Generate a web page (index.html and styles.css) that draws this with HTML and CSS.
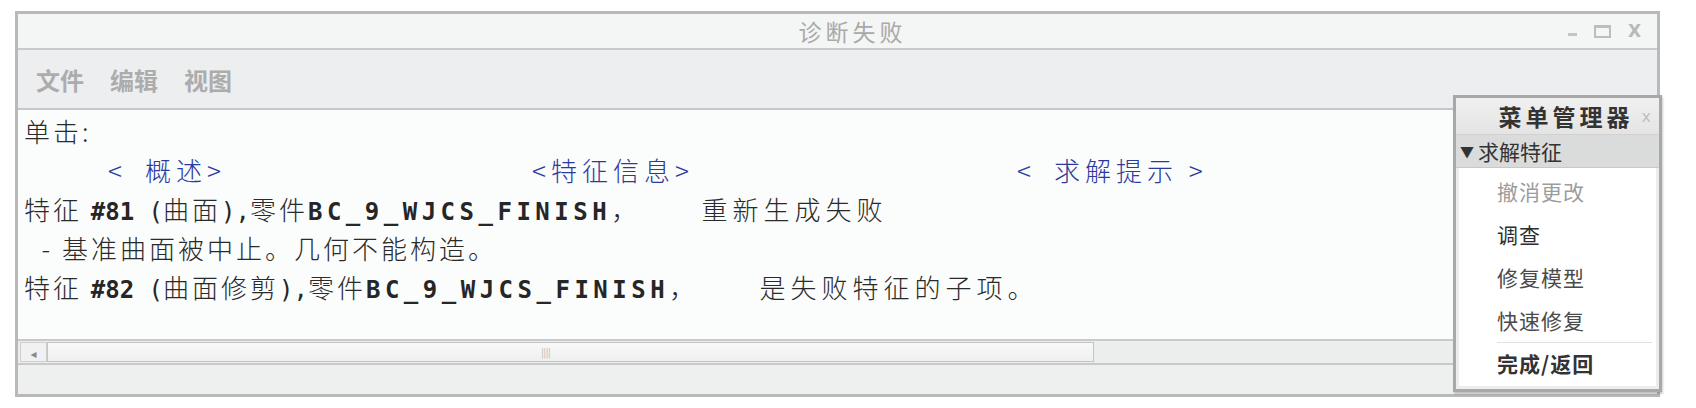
FILE: index.html
```html
<!DOCTYPE html>
<html lang="zh-CN">
<head>
  <meta charset="UTF-8" />
  <title>诊断失败</title>
  <link rel="stylesheet" href="styles.css">
</head>
<body>
  <div class="window">
    <div class="titlebar">
      <span class="title">诊断失败</span>
      <div class="controls">
        <span class="ctl-min"></span>
        <span class="ctl-max"></span>
        <span class="ctl-close">X</span>
      </div>
    </div>
    <div class="menubar">
      <span>文件</span>
      <span>编辑</span>
      <span>视图</span>
    </div>
    <div class="content">
      <div class="line">单击:</div>
      <div class="line links">
        <span class="link link-1">&lt;&ensp;概述&gt;</span>
        <span class="link link-2">&lt;特征信息&gt;</span>
        <span class="link">&lt;&ensp;求解提示 &gt;</span>
      </div>
      <div class="line">特征 <b class="mono">#81</b><span class="mono"> (</span>曲面<span class="mono">),</span>零件<b class="mono wide">BC_9_WJCS_FINISH</b>，       <span class="tail">重新生成失败</span></div>
      <div class="line">  - 基准曲面被中止。几何不能构造。</div>
      <div class="line">特征 <b class="mono">#82</b><span class="mono"> (</span>曲面修剪<span class="mono">),</span>零件<b class="mono wide">BC_9_WJCS_FINISH</b>，       <span class="tail">是失败特征的子项。</span></div>
    </div>
    <div class="hscroll">
      <span class="arrow">&#9666;</span>
      <span class="thumb"><span class="grip">||||</span></span>
      <span class="track"></span>
    </div>
    <div class="status"></div>

    <div class="menu-manager">
      <div class="mm-title">菜单管理器<span class="mm-close">x</span></div>
      <div class="mm-section"><span class="caret">&#9660;</span>求解特征</div>
      <div class="mm-items">
        <div class="mm-item disabled">撤消更改</div>
        <div class="mm-item strong">调查</div>
        <div class="mm-item">修复模型</div>
        <div class="mm-item">快速修复</div>
        <div class="mm-item done">完成/返回</div>
      </div>
    </div>
  </div>
</body>
</html>
```

FILE: styles.css
```css
body {
  margin: 0;
  background: #ffffff;
  font-family: "Noto Sans CJK SC", "DejaVu Sans", sans-serif;
  color: #222;
}
.window {
  position: relative;
  box-sizing: border-box;
  margin: 11px 0 0 15px;
  width: 1645px;
  height: 386px;
  border: 3px solid #b9b9b9;
  background: #f4f5f5;
  display: flex;
  flex-direction: column;
}
.titlebar {
  position: relative;
  height: 34px;
  flex: none;
  border-bottom: 2px solid #c9cacb;
  background: #f4f5f5;
  display: flex;
  align-items: center;
  justify-content: center;
}
.title {
  font-size: 23px;
  color: #a9a9a9;
  letter-spacing: 4px;
  margin-left: 30px;
}
.controls {
  position: absolute;
  right: 16px;
  top: 0;
  height: 34px;
  display: flex;
  align-items: center;
  gap: 17px;
}
.ctl-min {
  width: 9px;
  height: 3px;
  margin-top: 7px;
  background: #c4c4c4;
}
.ctl-max {
  width: 13px;
  height: 8px;
  border: 2px solid #bdbdbd;
  border-top-width: 3px;
}
.ctl-close {
  font-family: "DejaVu Sans", sans-serif;
  font-size: 17px;
  font-weight: bold;
  color: #b8b8b8;
  line-height: 1;
}
.menubar {
  height: 58px;
  flex: none;
  border-bottom: 2px solid #c6c7c8;
  background: #edeeef;
  display: flex;
  align-items: center;
  gap: 26px;
  padding-left: 18px;
  font-size: 24px;
  font-weight: bold;
  color: #acacac;
}
.content {
  height: 229px;
  flex: none;
  box-sizing: border-box;
  padding: 1px 0 0 6px;
  background: #fbfcfc;
  font-size: 26px;
  font-weight: 300;
  letter-spacing: 3px;
  line-height: 39px;
  color: #2a2a2a;
  overflow: hidden;
}
.line {
  white-space: pre;
  height: 39px;
}
.tail {
  letter-spacing: 5px;
}
.mono {
  font-family: "DejaVu Sans Mono", monospace;
  font-size: 24px;
  letter-spacing: 0;
  color: #262626;
}
b.mono {
  font-weight: bold;
}
.mono.wide {
  letter-spacing: 4.5px;
}
.links {
  display: flex;
  padding-left: 84px;
  letter-spacing: 5px;
}
.link {
  color: #2c3a9e;
}
.link-1 {
  width: 424px;
}
.link-2 {
  width: 485px;
}
.hscroll {
  height: 26px;
  flex: none;
  box-sizing: border-box;
  border-top: 2px solid #c8c9ca;
  border-bottom: 2px solid #c8c9ca;
  background: #eceded;
  display: flex;
  padding: 1px 0 1px 2px;
}
.arrow {
  width: 27px;
  box-sizing: border-box;
  border: 1px solid #cfcfcf;
  background: #f1f1f1;
  color: #8a8a8a;
  font-size: 12px;
  text-align: center;
  line-height: 20px;
}
.thumb {
  width: 1047px;
  box-sizing: border-box;
  border: 1px solid #c4c4c4;
  background: linear-gradient(#f8f8f8, #efefef);
  display: flex;
  justify-content: center;
  align-items: center;
}
.grip {
  font-family: "DejaVu Sans", sans-serif;
  font-size: 10px;
  color: #c4c4c4;
  letter-spacing: -1px;
  margin-left: -50px;
}
.track {
  flex: 1;
}
.status {
  flex: 1;
  background: #eeefef;
}
.menu-manager {
  position: absolute;
  right: -5px;
  top: 81px;
  width: 209px;
  height: 297px;
  box-sizing: border-box;
  border: 3px solid #a8a8a8;
  background: #ededed;
  box-shadow: 1px 2px 2px rgba(0, 0, 0, 0.2);
  display: flex;
  flex-direction: column;
}
.mm-title {
  height: 36px;
  flex: none;
  display: flex;
  align-items: center;
  justify-content: flex-end;
  padding-right: 8px;
  background: linear-gradient(#f0f0f0, #e4e4e4);
  font-size: 23px;
  font-weight: bold;
  letter-spacing: 4px;
  color: #333;
}
.mm-close {
  font-family: "DejaVu Sans", sans-serif;
  font-weight: normal;
  font-size: 16px;
  color: #c0c0c0;
  margin-left: 8px;
  letter-spacing: 0;
}
.mm-section {
  height: 34px;
  flex: none;
  box-sizing: border-box;
  border-top: 1px solid #d2d2d2;
  border-bottom: 1px solid #c8c8c8;
  background: #dadbdb;
  display: flex;
  align-items: center;
  padding-left: 4px;
  font-size: 21px;
  color: #333;
}
.caret {
  font-size: 14px;
  margin-right: 4px;
}
.mm-items {
  flex: 1;
  margin: 0 3px 3px 3px;
  background: #ffffff;
  padding: 2px 0 0 38px;
}
.mm-item {
  height: 43px;
  line-height: 43px;
  font-size: 21px;
  letter-spacing: 1px;
  color: #4a4a4a;
}
.mm-item.disabled {
  color: #9c9c9c;
}
.mm-item.strong {
  color: #2e2e2e;
}
.mm-item.done {
  border-top: 1px solid #e2e2e2;
  font-weight: bold;
  color: #333;
  height: 40px;
  line-height: 40px;
  margin-right: 4px;
}
```
